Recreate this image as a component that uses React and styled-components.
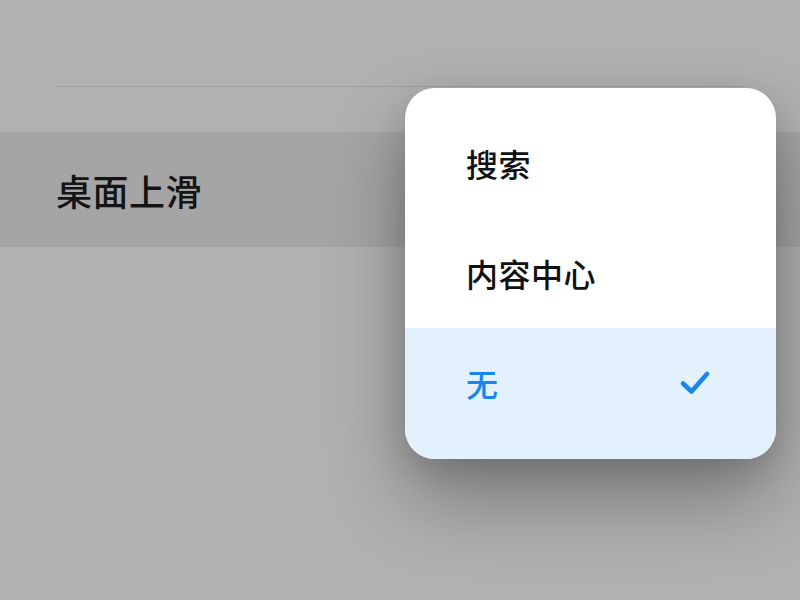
import React from "react";
import styled, { createGlobalStyle } from "styled-components";

const GlobalStyle = createGlobalStyle`
  html, body {
    margin: 0;
    padding: 0;
    background: #b1b1b1;
  }
  body {
    font-family: "Noto Sans CJK SC", "Noto Sans", sans-serif;
  }
`;

const Screen = styled.div`
  position: relative;
  width: 800px;
  height: 600px;
  overflow: hidden;
  background: #b1b1b1;
`;

const Divider = styled.div`
  height: 1px;
  margin: 86px 55px 0 55px;
  background: #9f9f9f;
`;

const SettingRow = styled.div`
  display: flex;
  align-items: center;
  height: 115px;
  margin-top: 45px;
  padding-left: 56px;
  background: #a5a5a5;
`;

const RowLabel = styled.span`
  font-size: 36px;
  font-weight: 500;
  color: #141414;
  letter-spacing: 0.5px;
`;

const Menu = styled.ul`
  position: absolute;
  top: 88px;
  left: 405px;
  width: 371px;
  margin: 0;
  padding: 20px 0 0;
  list-style: none;
  background: #fff;
  border-radius: 30px;
  overflow: hidden;
  box-shadow: 0 40px 80px rgba(0, 0, 0, 0.32), 0 10px 30px rgba(0, 0, 0, 0.12);
`;

const MenuItem = styled.li`
  display: flex;
  align-items: center;
  justify-content: space-between;
  height: 110px;
  padding: 0 64px 0 61px;
  padding-bottom: ${(p) => (p.$last ? "21px" : "0")};
  background: ${(p) => (p.$selected ? "#e3f0fe" : "transparent")};
  color: ${(p) => (p.$selected ? "#1a85ee" : "#111")};
  font-size: 32px;
  font-weight: 500;
  letter-spacing: 0.5px;
`;

const Check = () => (
  <svg width="34" height="28" viewBox="0 0 34 28" fill="none">
    <path
      d="M5 14.5 L13.5 22.5 L29 5"
      stroke="#1a85ee"
      strokeWidth="4.6"
      strokeLinecap="round"
      strokeLinejoin="round"
    />
  </svg>
);

const options = [
  { label: "搜索" },
  { label: "内容中心" },
  { label: "无", selected: true },
];

export default function App() {
  return (
    <Screen>
      <GlobalStyle />
      <Divider />
      <SettingRow>
        <RowLabel>桌面上滑</RowLabel>
      </SettingRow>
      <Menu>
        {options.map((o, i) => (
          <MenuItem
            key={o.label}
            $selected={o.selected}
            $last={i === options.length - 1}
          >
            <span>{o.label}</span>
            {o.selected && <Check />}
          </MenuItem>
        ))}
      </Menu>
    </Screen>
  );
}
